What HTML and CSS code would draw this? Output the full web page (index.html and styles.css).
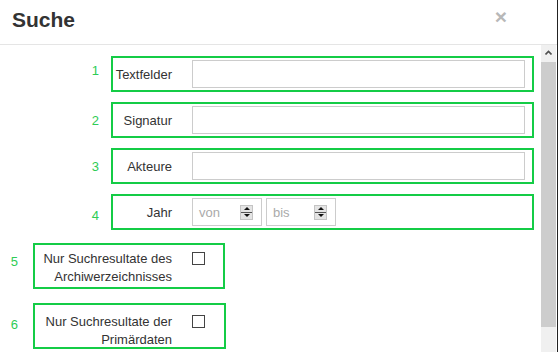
FILE: index.html
```html
<!DOCTYPE html>
<html lang="de">
    <head>
        <meta charset="UTF-8" />
        <meta name="viewport" content="width=device-width, initial-scale=1.0" />
        <title>Suche</title>
        <link rel="stylesheet" href="styles.css">
    </head>
    <body>
        <div class="modal">
            <div class="modal-header">
                <h2 class="modal-title">Suche</h2>
                <span class="close">&times;</span>
            </div>

            <div class="modal-main">
                <form class="modal-body">
                    <div class="group">
                        <span class="num up">1</span>
                        <div class="box">
                            <label class="label">Textfelder</label>
                            <input class="field" type="text" />
                        </div>
                    </div>

                    <div class="group">
                        <span class="num">2</span>
                        <div class="box">
                            <label class="label">Signatur</label>
                            <input class="field" type="text" />
                        </div>
                    </div>

                    <div class="group">
                        <span class="num">3</span>
                        <div class="box">
                            <label class="label">Akteure</label>
                            <input class="field" type="text" />
                        </div>
                    </div>

                    <div class="group last">
                        <span class="num down">4</span>
                        <div class="box">
                            <label class="label">Jahr</label>
                            <div class="num-field">
                                <span class="placeholder">von</span>
                                <span class="spin"><span class="spin-up"></span><span class="spin-down"></span></span>
                            </div>
                            <div class="num-field">
                                <span class="placeholder">bis</span>
                                <span class="spin"><span class="spin-up"></span><span class="spin-down"></span></span>
                            </div>
                        </div>
                    </div>

                    <div class="group check">
                        <span class="num">5</span>
                        <div class="box tall">
                            <label class="label wide">Nur Suchresultate des Archiwerzeichnisses</label>
                            <input class="checkbox" type="checkbox" />
                        </div>
                    </div>

                    <div class="group check">
                        <span class="num down">6</span>
                        <div class="box tall lower">
                            <label class="label wide">Nur Suchresultate der Primärdaten</label>
                            <input class="checkbox" type="checkbox" />
                        </div>
                    </div>
                </form>

                <div class="scrollbar">
                    <div class="sb-arrow">
                        <svg width="7" height="5" viewBox="0 0 7 5">
                            <polyline points="0.5,4.5 3.5,1.5 6.5,4.5" fill="none" stroke="#505050" stroke-width="1.6" />
                        </svg>
                    </div>
                    <div class="sb-thumb"></div>
                    <div class="sb-track"></div>
                </div>
            </div>
        </div>
    </body>
</html>
```

FILE: styles.css
```css
* {
    margin: 0;
    padding: 0;
    box-sizing: border-box;
}

body {
    font-family: "Liberation Sans", Arial, sans-serif;
    font-size: 13px;
    color: #333;
    background: #fff;
}

.modal {
    width: 558px;
    height: 352px;
    border-right: 1px solid #222;
    overflow: hidden;
    display: flex;
    flex-direction: column;
}

.modal-header {
    height: 45px;
    flex: none;
    display: flex;
    align-items: flex-start;
    justify-content: space-between;
    padding: 8px 50px 0 12px;
    border-bottom: 1px solid #e5e5e5;
}

.modal-title {
    font-size: 21px;
    font-weight: bold;
    line-height: 1.1;
    color: #333;
}

.close {
    font-size: 21px;
    font-weight: bold;
    line-height: 1;
    color: #b8b8b8;
    margin-top: -2px;
}

.modal-main {
    flex: 1;
    display: flex;
    min-height: 0;
}

.modal-body {
    flex: 1;
    padding-top: 11px;
}

.group {
    display: flex;
    align-items: flex-start;
    margin-left: 79px;
    margin-bottom: 10px;
}

.group.last {
    margin-bottom: 13px;
}

.group.check {
    margin-left: 0;
    margin-bottom: 14px;
}

.num {
    width: 20px;
    margin-right: 12px;
    margin-top: 12px;
    text-align: right;
    line-height: 13px;
    color: #2ecc55;
}

.num.up {
    margin-top: 8px;
}

.num.down {
    margin-top: 15px;
}

.group.check .num {
    width: 18px;
    margin-right: 15px;
}

.box {
    display: flex;
    align-items: center;
    width: 423px;
    height: 36px;
    border: 2px solid #14cc46;
}

.box.tall {
    width: 192px;
    height: 46px;
    align-items: flex-start;
    padding-top: 5px;
}

.box.lower {
    width: 193px;
    padding-top: 8px;
}

.label {
    width: 69px;
    padding-right: 10px;
    text-align: right;
    flex: none;
}

.label.wide {
    width: 147px;
    line-height: 18px;
}

.field {
    width: 333px;
    height: 28px;
    margin-left: 10px;
    border: 1px solid #ccc;
    font: inherit;
    padding: 0 6px;
}

.num-field {
    width: 70px;
    height: 28px;
    margin-left: 10px;
    border: 1px solid #ccc;
    display: flex;
    align-items: center;
    justify-content: space-between;
    padding: 0 8px 0 6px;
}

.num-field + .num-field {
    margin-left: 4px;
}

.placeholder {
    color: #aaa;
}

.spin {
    width: 13px;
    height: 15px;
    border: 1px solid #c4c4c4;
    background: #e4e4e4;
    display: flex;
    flex-direction: column;
}

.spin-up,
.spin-down {
    flex: 1;
    display: flex;
    align-items: center;
    justify-content: center;
}

.spin-down {
    border-top: 1px solid #555;
}

.spin-up::after,
.spin-down::after {
    content: "";
    width: 0;
    height: 0;
    border-left: 3px solid transparent;
    border-right: 3px solid transparent;
}

.spin-up::after {
    border-bottom: 3px solid #111;
}

.spin-down::after {
    border-top: 3px solid #111;
}

.checkbox {
    appearance: none;
    -webkit-appearance: none;
    width: 13px;
    height: 13px;
    margin: 2px 0 0 10px;
    border: 1px solid #444;
    background: #fff;
    flex: none;
}

.scrollbar {
    width: 15px;
    margin-right: 1px;
    display: flex;
    flex-direction: column;
}

.sb-arrow {
    height: 17px;
    background: #f0f0f0;
    display: flex;
    justify-content: center;
    padding-top: 5px;
}

.sb-thumb {
    height: 265px;
    background: #cdcdcd;
}

.sb-track {
    flex: 1;
    background: #f0f0f0;
}
```
